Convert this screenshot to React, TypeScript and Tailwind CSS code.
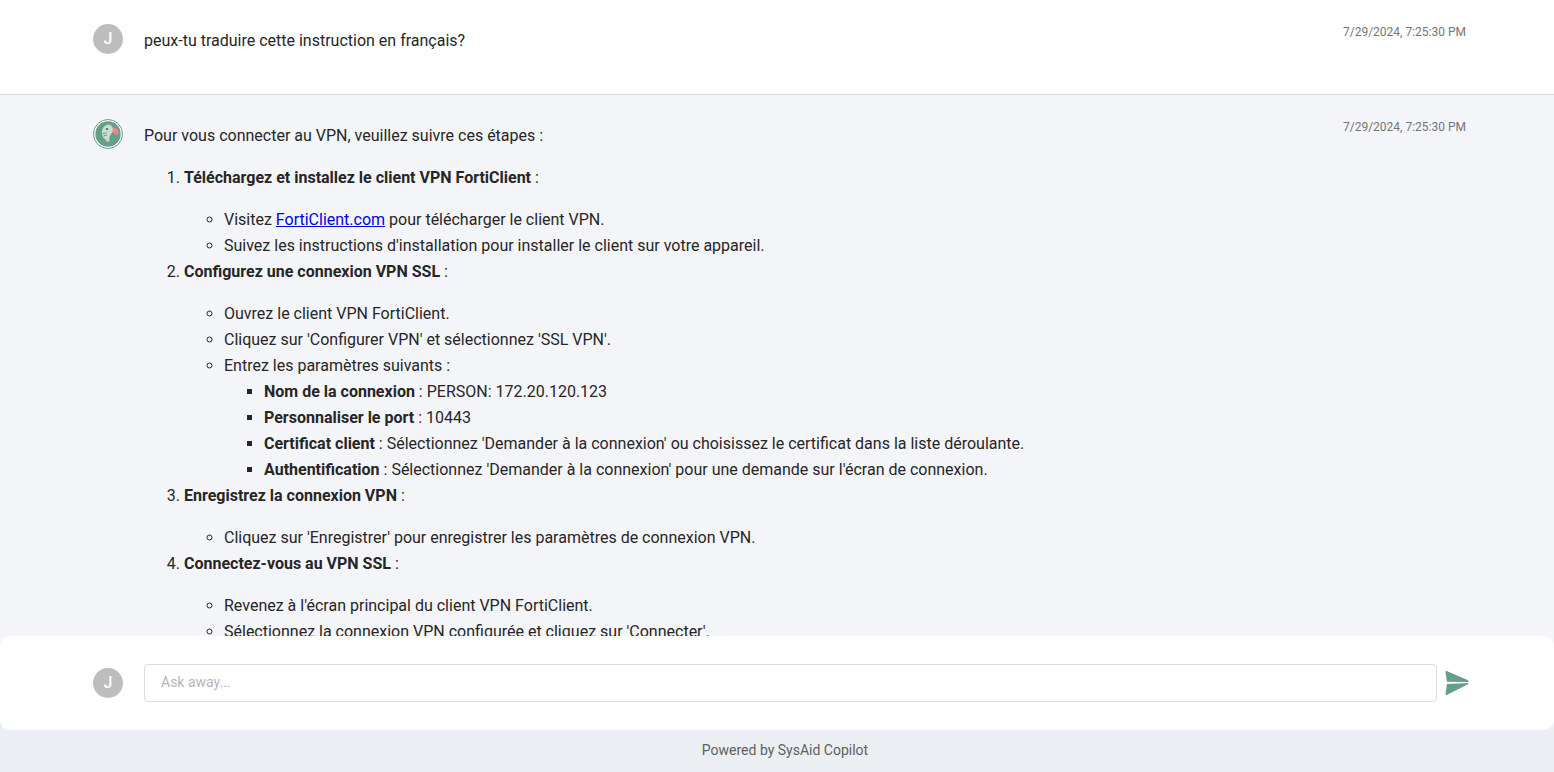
const UserAvatar = () => (
  <div className="w-[30px] h-[30px] shrink-0 rounded-full bg-[#bdbdbd] flex items-center justify-center text-white text-base font-medium">
    J
  </div>
);

const BotAvatar = () => (
  <svg width="30" height="30" viewBox="0 0 30 30" className="shrink-0">
    <circle cx="15" cy="15" r="14.5" fill="#fff" stroke="#659e89" strokeWidth="1" />
    <circle cx="15" cy="15" r="12.7" fill="#659e89" />
    <path d="M18.5 8.5 C21.5 7.8 25.5 10 25.5 13 C25.5 15 24.3 16.5 23 16.5 C22.5 14.5 21 13.5 18.5 13.5 Z" fill="#ee8585" />
    <path
      d="M9 12.5 C9.5 8.5 12.5 5.5 15.5 5.5 C18 5.5 19.8 7.5 19.8 10.5 C19.8 13 18.5 14.5 17.5 16 C16.5 17.5 16 19.5 16.5 22 L14 23 C13 21 12.5 20 11 19.5 C9.5 18 8.7 15 9 12.5 Z"
      fill="#c9ddd5"
    />
    <circle cx="14" cy="10" r="1.1" fill="#3c6355" />
    <path d="M9.5 14.5 L13.5 14 M10.5 17 L14 16.2" stroke="#659e89" strokeWidth="1" />
  </svg>
);

const SendIcon = () => (
  <svg width="26" height="26" viewBox="0 0 26 26" className="shrink-0">
    <path
      d="M1.5 2.2 C1.5 1 2.2 0.8 3.2 1.2 L23 9.8 C24.4 10.5 24.8 11.3 24.6 12 L3 11.8 C2.6 9 2 5.5 1.5 2.2 Z"
      fill="#659e89"
    />
    <path
      d="M3 14 L24.6 13 C24.6 13.6 24 14.2 23 14.8 L3.2 24.8 C2.2 25.2 1.5 25 1.5 23.8 C2 20.5 2.6 17 3 14 Z"
      fill="#659e89"
    />
  </svg>
);

const Timestamp = () => (
  <div className="absolute top-[25px] right-[88px] text-xs leading-[15px] text-[#757575]">7/29/2024, 7:25:30 PM</div>
);

const App = () => {
  return (
    <div
      className="h-screen flex flex-col overflow-hidden bg-[#ebeff3] text-base leading-[26px] text-[#262626]"
      style={{ fontFamily: "Roboto, sans-serif" }}
    >
      <div className="flex-1 min-h-0 overflow-hidden -mb-3">
        <div className="relative h-[95px] bg-white border-b border-[#d9d9d9] pl-[93px] pt-[24px] flex gap-[21px]">
          <UserAvatar />
          <p className="pt-1">peux-tu traduire cette instruction en français?</p>
          <Timestamp />
        </div>

        <div className="relative min-h-[600px] bg-[#f4f5f9] pl-[93px] pt-[24px] flex gap-[21px]">
          <BotAvatar />
          <div className="pt-1">
            <p className="mb-4">Pour vous connecter au VPN, veuillez suivre ces étapes :</p>
            <ol className="list-decimal pl-10">
              <li>
                <p className="mb-4">
                  <strong className="font-bold">Téléchargez et installez le client VPN FortiClient</strong> :
                </p>
                <ul className="list-[circle] pl-10">
                  <li>
                    Visitez{" "}
                    <a href="#" className="text-[#0000ee] underline">
                      FortiClient.com
                    </a>{" "}
                    pour télécharger le client VPN.
                  </li>
                  <li>Suivez les instructions d'installation pour installer le client sur votre appareil.</li>
                </ul>
              </li>
              <li>
                <p className="mb-4">
                  <strong className="font-bold">Configurez une connexion VPN SSL</strong> :
                </p>
                <ul className="list-[circle] pl-10">
                  <li>Ouvrez le client VPN FortiClient.</li>
                  <li>Cliquez sur 'Configurer VPN' et sélectionnez 'SSL VPN'.</li>
                  <li>
                    Entrez les paramètres suivants :
                    <ul className="list-[square] pl-10">
                      <li>
                        <strong className="font-bold">Nom de la connexion</strong> : PERSON: 172.20.120.123
                      </li>
                      <li>
                        <strong className="font-bold">Personnaliser le port</strong> : 10443
                      </li>
                      <li>
                        <strong className="font-bold">Certificat client</strong> : Sélectionnez 'Demander à la connexion' ou choisissez le certificat dans la liste déroulante.
                      </li>
                      <li>
                        <strong className="font-bold">Authentification</strong> : Sélectionnez 'Demander à la connexion' pour une demande sur l'écran de connexion.
                      </li>
                    </ul>
                  </li>
                </ul>
              </li>
              <li>
                <p className="mb-4">
                  <strong className="font-bold">Enregistrez la connexion VPN</strong> :
                </p>
                <ul className="list-[circle] pl-10">
                  <li>Cliquez sur 'Enregistrer' pour enregistrer les paramètres de connexion VPN.</li>
                </ul>
              </li>
              <li>
                <p className="mb-4">
                  <strong className="font-bold">Connectez-vous au VPN SSL</strong> :
                </p>
                <ul className="list-[circle] pl-10">
                  <li>Revenez à l'écran principal du client VPN FortiClient.</li>
                  <li>Sélectionnez la connexion VPN configurée et cliquez sur 'Connecter'.</li>
                </ul>
              </li>
            </ol>
          </div>
          <Timestamp />
        </div>
      </div>

      <div className="relative h-[94px] shrink-0 bg-white rounded-[10px] pl-[93px] pr-[84px] flex items-center gap-[21px]">
        <UserAvatar />
        <div className="flex-1 flex items-center gap-[7px]">
          <input
            placeholder="Ask away..."
            className="flex-1 h-[38px] border border-[#dcdcdc] rounded px-4 pb-0.5 text-sm bg-white outline-none placeholder:text-[#b5b5b5]"
          />
          <SendIcon />
        </div>
      </div>

      <div className="h-[42px] shrink-0 pl-4 pb-0.5 flex items-center justify-center text-sm text-[#5f5f5f]">
        Powered by SysAid Copilot
      </div>
    </div>
  );
};

export default App;
